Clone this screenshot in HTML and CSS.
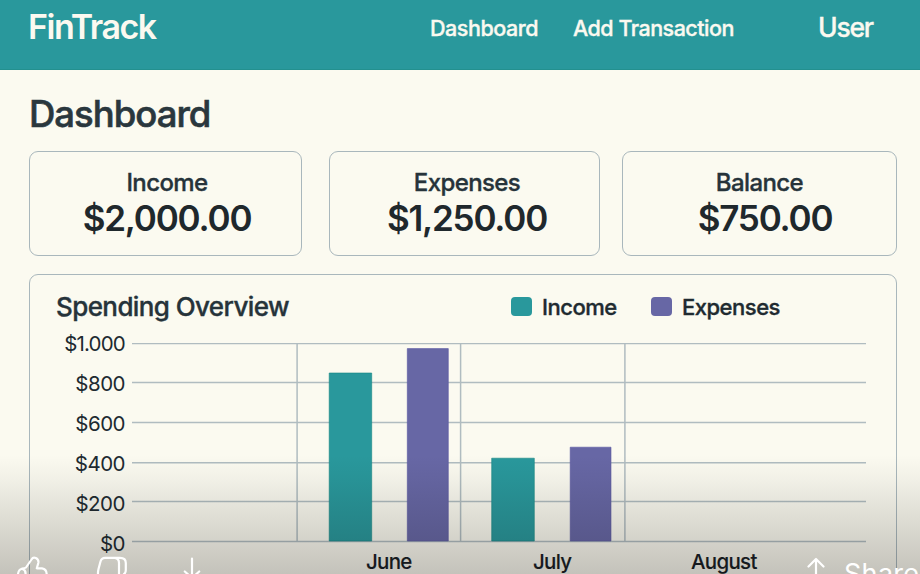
FILE: index.html
```html
<!DOCTYPE html>
<html lang="en">
<head>
<meta charset="utf-8">
<title>FinTrack</title>
<link rel="stylesheet" href="styles.css">
</head>
<body>
<header class="topbar">
  <div class="brand">FinTrack</div>
  <nav class="nav"><a class="nav-dash">Dashboard</a><a class="nav-add">Add Transaction</a></nav>
  <div class="user">User</div>
</header>
<main class="page">
  <h1>Dashboard</h1>
  <section class="cards">
    <article class="card income"><h2>Income</h2><p>$2,000.00</p></article>
    <article class="card expenses"><h2>Expenses</h2><p>$1,250.00</p></article>
    <article class="card balance"><h2>Balance</h2><p>$750.00</p></article>
  </section>
  <section class="panel">
    <div class="panel-head">
      <h3>Spending Overview</h3>
      <div class="legend"><i class="swatch teal"></i><span class="lg-income">Income</span><i class="swatch violet"></i><span class="lg-exp">Expenses</span></div>
    </div>
    <div class="chart">
      <div class="axis"><span class="thousand">$1.000</span><span>$800</span><span>$600</span><span>$400</span><span>$200</span><span>$0</span></div>
      <div class="plot-area">
        <svg class="plot" width="734" height="200" viewBox="132 343 734 200">
          <g class="grid">
            <path d="M132 343.6H866M132 382.4H866M132 422.6H866M132 462.7H866M132 501.6H866M132 541.6H866"/>
            <path d="M297.1 343V541.6M460.6 343V541.6M624.9 343V541.6"/>
          </g>
          <path class="bar-teal" d="M329.200 373h42.500V541h-42.500zM491.700 458.200h42.600V541h-42.600z"/>
          <path class="bar-violet" d="M407.300 348.600h41V541h-41zM570.200 447.200h40.800V541H570.200z"/>
        </svg>
        <div class="months"><span class="m1">June</span><span class="m2">July</span><span class="m3">August</span></div>
      </div>
    </div>
  </section>
</main>
<div class="overlay">
  <svg class="up" width="34" height="18" viewBox="0 0 34 18"><path d="M2 18Q2.500 13.500 6 12.700Q9 12.300 10 11.500L15.500 3.500Q17 .8 19.800 2Q23 3.500 22.300 7L20.800 12.300H26Q30.500 13 30.700 18M6 12.700Q10 14 9.500 18"/></svg>
  <svg class="down" width="34" height="18" viewBox="0 0 34 18"><path d="M2 18Q1.800 16 2.500 13L4.500 5.500Q5.500 1.800 9 1.800H24Q29.800 1.800 29.800 7V14Q29.800 17 28 18M19 1.800Q23 2.500 23 7V18"/></svg>
  <svg class="save" width="20" height="18" viewBox="0 0 20 18"><path d="M10 2.500V22M2.800 15.500L10 22L17.200 15.500"/></svg>
  <svg class="send" width="20" height="18" viewBox="0 0 20 18"><path d="M10 24V3M2.500 10.500L10 3L17.500 10.500"/></svg>
  <span class="share">Share</span>
</div>
</body>
</html>
```

FILE: styles.css
```css
* { box-sizing: border-box; margin: 0; padding: 0; }
html, body { width: 920px; height: 574px; overflow: hidden; }
body { position: relative; background: #fbfaf0; color: #202a30; font-family: Inter, sans-serif; white-space: nowrap; }
.nav, .user, h1, h2, h3, .legend, .months { -webkit-text-stroke: 0.35px currentColor; }
.topbar { display: flex; align-items: flex-start; height: 70px; background: #29989c; border-bottom: 1px solid #23908f; color: #fbf9f0; }
.brand { width: 402px; padding: 6px 0 0 28px; font-size: 34px; line-height: 41px; font-weight: 600; letter-spacing: -1.5px; }
.nav { display: flex; width: 416px; padding: 8px 0 0 28px; font-size: 21.5px; line-height: 41px; font-weight: 500; }
.nav-dash { width: 143px; letter-spacing: -0.45px; }
.nav-add { letter-spacing: -0.5px; }
.user { padding-top: 7px; font-size: 26.5px; line-height: 41px; font-weight: 500; letter-spacing: -1.2px; }
.page { height: 504px; overflow: hidden; padding: 19px 23px 0 29px; }
h1 { height: 62px; font-size: 36.5px; line-height: 50px; font-weight: 500; letter-spacing: -1px; color: #2a373d; -webkit-text-stroke-width: 0.6px; }
.cards { display: grid; grid-template-columns: 273px 271px 275px; column-gap: 27px; height: 105px; }
.cards .balance { margin-left: -5px; margin-right: 5px; width: 275px; }
.card { border: 1px solid #a9b7bc; border-radius: 9px; text-align: center; padding-top: 15px; }
.card h2 { font-size: 24px; line-height: 31px; font-weight: 500; letter-spacing: -0.6px; color: #26333a; }
.card p { font-size: 35px; line-height: 41px; font-weight: 600; letter-spacing: -1.2px; color: #1f282c; }
.income h2 { padding-left: 3px; }
.income p { padding-left: 3px; }
.expenses h2, .expenses p { padding-left: 5px; }
.balance p { padding-left: 11px; }
.panel { width: 868px; height: 330px; margin-top: 18px; border: 1px solid #a9b7bc; border-radius: 9px; padding: 15px 0 0 26px; }
.panel-head { display: flex; height: 37px; }
h3 { width: 455px; font-size: 26px; line-height: 34px; font-weight: 500; letter-spacing: -0.6px; color: #26333a; }
.legend { display: flex; align-items: center; height: 33px; font-size: 22px; font-weight: 500; letter-spacing: -0.5px; }
.swatch { width: 21px; height: 19px; border-radius: 4px; }
.teal { background: #29989c; }
.violet { background: #6767a5; }
.lg-income { width: 119px; padding-left: 10px; }
.lg-exp { padding-left: 10px; }
.chart { display: flex; }
.axis { display: flex; flex-direction: column; width: 69px; text-align: right; font-size: 20.5px; line-height: 40px; letter-spacing: -0.5px; margin: -3px 7px 0 0; }
.thousand { letter-spacing: -0.8px; }
.plot-area { width: 734px; padding-top: 16px; }
.plot { display: block; }
.grid path { fill: none; stroke: #b0bcc0; stroke-width: 1.5; }
.bar-teal { fill: #29989c; stroke: #158783; stroke-width: 0.6; }
.bar-violet { fill: #6767a5; stroke: #5a58a3; stroke-width: 0.6; }
.months { display: flex; font-size: 20.5px; line-height: 38px; font-weight: 500; letter-spacing: -0.7px; color: #171d24; -webkit-text-stroke-width: 0.1px; }
.m1 { width: 167px; margin-left: 234px; }
.m2 { width: 158px; }
.overlay { position: absolute; left: 0; top: 455px; width: 920px; height: 119px; overflow: hidden; display: flex; align-items: flex-start; padding-top: 101px; color: #fff; background: linear-gradient(rgba(14,14,10,0), rgba(14,14,10,.04) 20%, rgba(14,14,10,.09) 40%, rgba(14,12,10,.16) 70%, rgba(14,10,10,.23)); }
.overlay svg { flex: none; fill: none; stroke: #fff; stroke-width: 2.2; stroke-linecap: round; stroke-linejoin: round; }
.up { margin-left: 16px; }
.down { margin-left: 46px; }
.save { margin-left: 52px; }
.send { margin-left: 604px; }
.share { margin: 1px 0 0 18px; font-size: 27px; line-height: 34px; letter-spacing: 0.3px; }
```
